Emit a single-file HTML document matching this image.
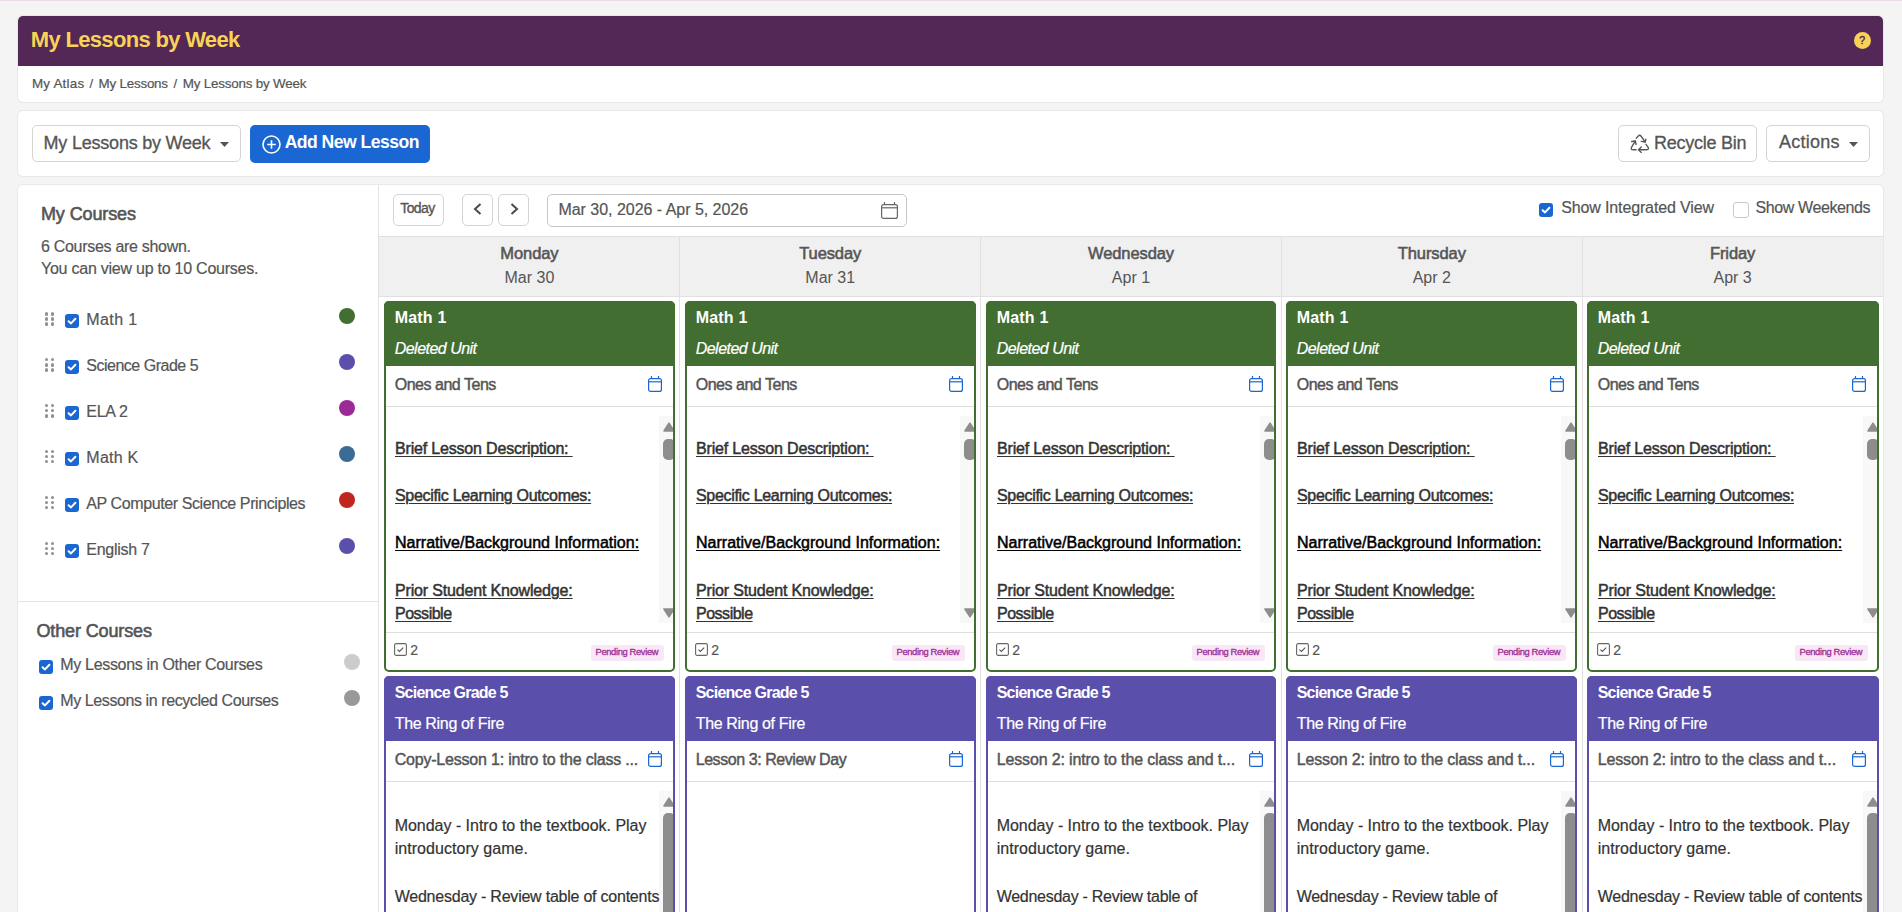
<!DOCTYPE html>
<html><head><meta charset="utf-8">
<style>
*{box-sizing:border-box;margin:0;padding:0}
html,body{width:1902px;height:912px;overflow:hidden;background:#f4f4f4;font-family:"Liberation Sans",sans-serif;color:#555}
.a{position:absolute}
.t{position:absolute;white-space:nowrap;line-height:1}
.cb{position:absolute;width:14px;height:14px;border-radius:3px;background:#1a66d2}
.cb svg{position:absolute;left:0;top:0}
.semi{-webkit-text-stroke:0.25px currentColor}
u{text-decoration:underline;text-decoration-thickness:1px;text-underline-offset:2px}
</style></head><body>
<div class="a" style="left:0px;top:0px;width:1902px;height:1px;background:#e9deea"></div>
<div class="a" style="left:18px;top:16px;width:1865px;height:86px;background:#fff;border-radius:5px;box-shadow:0 0 0 1px #e8e8e8"></div>
<div class="a" style="left:18px;top:16px;width:1865px;height:50px;background:#532756;border-radius:5px 5px 0 0"></div>
<div class="t" style="left:30.8px;top:28.6px;font-size:22px;color:#f8d354;font-weight:bold;letter-spacing:-0.676px">My Lessons by Week</div>
<div class="a" style="left:1853.5px;top:31.5px;width:17px;height:17px;border-radius:50%;background:#f7d257"></div>
<div class="t" style="left:1859.2px;top:35.3px;font-size:10.5px;color:#532756;-webkit-text-stroke:0.4px #532756">?</div>
<div class="t" style="left:32.0px;top:76.7px;font-size:13.4px;color:#555;letter-spacing:0.214px;-webkit-text-stroke:0.2px #555">My Atlas</div>
<div class="t" style="left:89.5px;top:76.8px;font-size:13px;color:#555;-webkit-text-stroke:0.2px #555">/</div>
<div class="t" style="left:98.6px;top:76.7px;font-size:13.4px;color:#555;letter-spacing:-0.222px;-webkit-text-stroke:0.2px #555">My Lessons</div>
<div class="t" style="left:173.5px;top:76.8px;font-size:13px;color:#555;-webkit-text-stroke:0.2px #555">/</div>
<div class="t" style="left:182.8px;top:76.7px;font-size:13.4px;color:#555;letter-spacing:-0.2px;-webkit-text-stroke:0.2px #555">My Lessons by Week</div>
<div class="a" style="left:18px;top:111px;width:1865px;height:65px;background:#fff;border-radius:5px;box-shadow:0 0 0 1px #e8e8e8"></div>
<div class="a" style="left:32px;top:125px;width:209px;height:37px;border:1px solid #d4d4d4;border-radius:5px;background:#fff"></div>
<div class="t" style="left:43.6px;top:133.6px;font-size:18px;color:#555;letter-spacing:-0.218px;-webkit-text-stroke:0.3px #555">My Lessons by Week</div>
<svg class="a" style="left:220px;top:142px" width="9" height="5" viewBox="0 0 9 5"><path d="M0 0 L9 0 L4.5 5 Z" fill="#555"/></svg>
<div class="a" style="left:250px;top:125px;width:180px;height:38px;background:#1a66d2;border-radius:5px"></div>
<svg class="a" style="left:262px;top:135px" width="19" height="19" viewBox="0 0 19 19"><circle cx="9.5" cy="9.5" r="8.5" fill="none" stroke="#fff" stroke-width="1.6"/><path d="M9.5 5.2V13.8M5.2 9.5H13.8" stroke="#fff" stroke-width="1.6"/></svg>
<div class="t" style="left:284.7px;top:134.3px;font-size:17.6px;color:#fff;font-weight:bold;letter-spacing:-0.538px">Add New Lesson</div>
<div class="a" style="left:1618px;top:125px;width:139px;height:37px;border:1px solid #d4d4d4;border-radius:5px;background:#fff"></div>
<svg class="a" style="left:1626px;top:130px" width="28" height="26" viewBox="0 0 28 26" fill="none" stroke="#555" stroke-width="1.35" stroke-linecap="round" stroke-linejoin="round"><path d="M10.3 8.3 L12.4 5.9 Q13.7 4.6 14.9 6.0 L19.2 11.9"/><path d="M15.3 11.4 L19.3 12.0 L19.8 9.1"/><path d="M10 19.7 L6.9 19.7 Q4.6 19.5 5.5 17.4 L9.3 10.8"/><path d="M5.7 11.5 L9.3 10.8 L10.1 14.5"/><path d="M20 14.3 L22.2 17.4 Q23.1 19.6 20.6 19.7 L12.5 19.7"/><path d="M15.3 17.0 L12.5 19.7 L15.3 22.4"/></svg>
<div class="t" style="left:1654.0px;top:133.7px;font-size:18px;color:#555;letter-spacing:-0.26px;-webkit-text-stroke:0.3px #555">Recycle Bin</div>
<div class="a" style="left:1766px;top:125px;width:104px;height:37px;border:1px solid #d4d4d4;border-radius:5px;background:#fff"></div>
<div class="t" style="left:1779.0px;top:132.7px;font-size:18px;color:#555;letter-spacing:0.233px;-webkit-text-stroke:0.3px #555">Actions</div>
<svg class="a" style="left:1848.5px;top:141.5px" width="9" height="5" viewBox="0 0 9 5"><path d="M0 0 L9 0 L4.5 5 Z" fill="#555"/></svg>
<div class="a" style="left:18px;top:185px;width:1865px;height:755px;background:#fff;border-radius:5px;box-shadow:0 0 0 1px #e8e8e8"></div>
<div class="a" style="left:378px;top:185px;width:1px;height:727px;background:#e2e2e2"></div>
<div class="t" style="left:41.0px;top:205.1px;font-size:18px;color:#555;letter-spacing:-0.122px;-webkit-text-stroke:0.6px #555">My Courses</div>
<div class="t" style="left:41.0px;top:238.7px;font-size:16px;color:#555;letter-spacing:-0.295px;-webkit-text-stroke:0.2px #555">6 Courses are shown.</div>
<div class="t" style="left:41.0px;top:260.7px;font-size:16px;color:#555;letter-spacing:-0.241px;-webkit-text-stroke:0.2px #555">You can view up to 10 Courses.</div>
<div class="a" style="left:45px;top:312.3px;width:9px;height:14px"><i style="position:absolute;left:0.0px;top:0.0px;width:3.3px;height:3.3px;border-radius:50%;background:#8f8f8f"></i><i style="position:absolute;left:5.7px;top:0.0px;width:3.3px;height:3.3px;border-radius:50%;background:#8f8f8f"></i><i style="position:absolute;left:0.0px;top:5.1px;width:3.3px;height:3.3px;border-radius:50%;background:#8f8f8f"></i><i style="position:absolute;left:5.7px;top:5.1px;width:3.3px;height:3.3px;border-radius:50%;background:#8f8f8f"></i><i style="position:absolute;left:0.0px;top:10.2px;width:3.3px;height:3.3px;border-radius:50%;background:#8f8f8f"></i><i style="position:absolute;left:5.7px;top:10.2px;width:3.3px;height:3.3px;border-radius:50%;background:#8f8f8f"></i></div>
<div class="cb" style="left:65px;top:314.0px"><svg width="14" height="14" viewBox="0 0 14 14"><path d="M3.6 7.2 L6 9.4 L10.4 4.8" fill="none" stroke="#fff" stroke-width="2" stroke-linecap="round" stroke-linejoin="round"/></svg></div>
<div class="t" style="left:86.3px;top:312.0px;font-size:16px;color:#555;letter-spacing:0.4px;-webkit-text-stroke:0.2px #555">Math 1</div>
<div class="a" style="left:339px;top:308.0px;width:16px;height:16px;border-radius:50%;background:#426e32"></div>
<div class="a" style="left:45px;top:358.2px;width:9px;height:14px"><i style="position:absolute;left:0.0px;top:0.0px;width:3.3px;height:3.3px;border-radius:50%;background:#8f8f8f"></i><i style="position:absolute;left:5.7px;top:0.0px;width:3.3px;height:3.3px;border-radius:50%;background:#8f8f8f"></i><i style="position:absolute;left:0.0px;top:5.1px;width:3.3px;height:3.3px;border-radius:50%;background:#8f8f8f"></i><i style="position:absolute;left:5.7px;top:5.1px;width:3.3px;height:3.3px;border-radius:50%;background:#8f8f8f"></i><i style="position:absolute;left:0.0px;top:10.2px;width:3.3px;height:3.3px;border-radius:50%;background:#8f8f8f"></i><i style="position:absolute;left:5.7px;top:10.2px;width:3.3px;height:3.3px;border-radius:50%;background:#8f8f8f"></i></div>
<div class="cb" style="left:65px;top:359.9px"><svg width="14" height="14" viewBox="0 0 14 14"><path d="M3.6 7.2 L6 9.4 L10.4 4.8" fill="none" stroke="#fff" stroke-width="2" stroke-linecap="round" stroke-linejoin="round"/></svg></div>
<div class="t" style="left:86.3px;top:357.9px;font-size:16px;color:#555;letter-spacing:-0.493px;-webkit-text-stroke:0.2px #555">Science Grade 5</div>
<div class="a" style="left:339px;top:353.9px;width:16px;height:16px;border-radius:50%;background:#5a50ab"></div>
<div class="a" style="left:45px;top:404.1px;width:9px;height:14px"><i style="position:absolute;left:0.0px;top:0.0px;width:3.3px;height:3.3px;border-radius:50%;background:#8f8f8f"></i><i style="position:absolute;left:5.7px;top:0.0px;width:3.3px;height:3.3px;border-radius:50%;background:#8f8f8f"></i><i style="position:absolute;left:0.0px;top:5.1px;width:3.3px;height:3.3px;border-radius:50%;background:#8f8f8f"></i><i style="position:absolute;left:5.7px;top:5.1px;width:3.3px;height:3.3px;border-radius:50%;background:#8f8f8f"></i><i style="position:absolute;left:0.0px;top:10.2px;width:3.3px;height:3.3px;border-radius:50%;background:#8f8f8f"></i><i style="position:absolute;left:5.7px;top:10.2px;width:3.3px;height:3.3px;border-radius:50%;background:#8f8f8f"></i></div>
<div class="cb" style="left:65px;top:405.8px"><svg width="14" height="14" viewBox="0 0 14 14"><path d="M3.6 7.2 L6 9.4 L10.4 4.8" fill="none" stroke="#fff" stroke-width="2" stroke-linecap="round" stroke-linejoin="round"/></svg></div>
<div class="t" style="left:86.3px;top:403.8px;font-size:16px;color:#555;letter-spacing:-0.25px;-webkit-text-stroke:0.2px #555">ELA 2</div>
<div class="a" style="left:339px;top:399.8px;width:16px;height:16px;border-radius:50%;background:#9b2a96"></div>
<div class="a" style="left:45px;top:450.0px;width:9px;height:14px"><i style="position:absolute;left:0.0px;top:0.0px;width:3.3px;height:3.3px;border-radius:50%;background:#8f8f8f"></i><i style="position:absolute;left:5.7px;top:0.0px;width:3.3px;height:3.3px;border-radius:50%;background:#8f8f8f"></i><i style="position:absolute;left:0.0px;top:5.1px;width:3.3px;height:3.3px;border-radius:50%;background:#8f8f8f"></i><i style="position:absolute;left:5.7px;top:5.1px;width:3.3px;height:3.3px;border-radius:50%;background:#8f8f8f"></i><i style="position:absolute;left:0.0px;top:10.2px;width:3.3px;height:3.3px;border-radius:50%;background:#8f8f8f"></i><i style="position:absolute;left:5.7px;top:10.2px;width:3.3px;height:3.3px;border-radius:50%;background:#8f8f8f"></i></div>
<div class="cb" style="left:65px;top:451.7px"><svg width="14" height="14" viewBox="0 0 14 14"><path d="M3.6 7.2 L6 9.4 L10.4 4.8" fill="none" stroke="#fff" stroke-width="2" stroke-linecap="round" stroke-linejoin="round"/></svg></div>
<div class="t" style="left:86.3px;top:449.7px;font-size:16px;color:#555;letter-spacing:0.26px;-webkit-text-stroke:0.2px #555">Math K</div>
<div class="a" style="left:339px;top:445.7px;width:16px;height:16px;border-radius:50%;background:#3b6c96"></div>
<div class="a" style="left:45px;top:495.9px;width:9px;height:14px"><i style="position:absolute;left:0.0px;top:0.0px;width:3.3px;height:3.3px;border-radius:50%;background:#8f8f8f"></i><i style="position:absolute;left:5.7px;top:0.0px;width:3.3px;height:3.3px;border-radius:50%;background:#8f8f8f"></i><i style="position:absolute;left:0.0px;top:5.1px;width:3.3px;height:3.3px;border-radius:50%;background:#8f8f8f"></i><i style="position:absolute;left:5.7px;top:5.1px;width:3.3px;height:3.3px;border-radius:50%;background:#8f8f8f"></i><i style="position:absolute;left:0.0px;top:10.2px;width:3.3px;height:3.3px;border-radius:50%;background:#8f8f8f"></i><i style="position:absolute;left:5.7px;top:10.2px;width:3.3px;height:3.3px;border-radius:50%;background:#8f8f8f"></i></div>
<div class="cb" style="left:65px;top:497.6px"><svg width="14" height="14" viewBox="0 0 14 14"><path d="M3.6 7.2 L6 9.4 L10.4 4.8" fill="none" stroke="#fff" stroke-width="2" stroke-linecap="round" stroke-linejoin="round"/></svg></div>
<div class="t" style="left:86.3px;top:495.6px;font-size:16px;color:#555;letter-spacing:-0.4px;-webkit-text-stroke:0.2px #555">AP Computer Science Principles</div>
<div class="a" style="left:339px;top:491.6px;width:16px;height:16px;border-radius:50%;background:#c0251f"></div>
<div class="a" style="left:45px;top:541.8px;width:9px;height:14px"><i style="position:absolute;left:0.0px;top:0.0px;width:3.3px;height:3.3px;border-radius:50%;background:#8f8f8f"></i><i style="position:absolute;left:5.7px;top:0.0px;width:3.3px;height:3.3px;border-radius:50%;background:#8f8f8f"></i><i style="position:absolute;left:0.0px;top:5.1px;width:3.3px;height:3.3px;border-radius:50%;background:#8f8f8f"></i><i style="position:absolute;left:5.7px;top:5.1px;width:3.3px;height:3.3px;border-radius:50%;background:#8f8f8f"></i><i style="position:absolute;left:0.0px;top:10.2px;width:3.3px;height:3.3px;border-radius:50%;background:#8f8f8f"></i><i style="position:absolute;left:5.7px;top:10.2px;width:3.3px;height:3.3px;border-radius:50%;background:#8f8f8f"></i></div>
<div class="cb" style="left:65px;top:543.5px"><svg width="14" height="14" viewBox="0 0 14 14"><path d="M3.6 7.2 L6 9.4 L10.4 4.8" fill="none" stroke="#fff" stroke-width="2" stroke-linecap="round" stroke-linejoin="round"/></svg></div>
<div class="t" style="left:86.3px;top:541.5px;font-size:16px;color:#555;letter-spacing:-0.263px;-webkit-text-stroke:0.2px #555">English 7</div>
<div class="a" style="left:339px;top:537.5px;width:16px;height:16px;border-radius:50%;background:#5a50ab"></div>
<div class="a" style="left:18px;top:601px;width:360px;height:1px;background:#e2e2e2"></div>
<div class="t" style="left:36.5px;top:622.1px;font-size:18px;color:#555;letter-spacing:-0.133px;-webkit-text-stroke:0.6px #555">Other Courses</div>
<div class="cb" style="left:39px;top:659.5px"><svg width="14" height="14" viewBox="0 0 14 14"><path d="M3.6 7.2 L6 9.4 L10.4 4.8" fill="none" stroke="#fff" stroke-width="2" stroke-linecap="round" stroke-linejoin="round"/></svg></div>
<div class="t" style="left:60.3px;top:656.7px;font-size:16px;color:#555;letter-spacing:-0.323px;-webkit-text-stroke:0.2px #555">My Lessons in Other Courses</div>
<div class="a" style="left:344px;top:654px;width:16px;height:16px;border-radius:50%;background:#cccccc"></div>
<div class="cb" style="left:39px;top:695.5px"><svg width="14" height="14" viewBox="0 0 14 14"><path d="M3.6 7.2 L6 9.4 L10.4 4.8" fill="none" stroke="#fff" stroke-width="2" stroke-linecap="round" stroke-linejoin="round"/></svg></div>
<div class="t" style="left:60.3px;top:692.7px;font-size:16px;color:#555;letter-spacing:-0.41px;-webkit-text-stroke:0.2px #555">My Lessons in recycled Courses</div>
<div class="a" style="left:344px;top:690px;width:16px;height:16px;border-radius:50%;background:#999999"></div>
<div class="a" style="left:393px;top:194px;width:51px;height:32px;border:1px solid #d4d4d4;border-radius:5px;background:#fff"></div>
<div class="t" style="left:400.3px;top:201.0px;font-size:14px;color:#555;letter-spacing:-0.625px;-webkit-text-stroke:0.35px #555">Today</div>
<div class="a" style="left:462px;top:194px;width:31px;height:32px;border:1px solid #d4d4d4;border-radius:5px;background:#fff"></div>
<div class="a" style="left:498px;top:194px;width:31px;height:32px;border:1px solid #d4d4d4;border-radius:5px;background:#fff"></div>
<svg class="a" style="left:473px;top:203px" width="9" height="12" viewBox="0 0 9 12"><path d="M7.5 1 L2 6 L7.5 11" fill="none" stroke="#4a4a4a" stroke-width="2"/></svg>
<svg class="a" style="left:510px;top:203px" width="9" height="12" viewBox="0 0 9 12"><path d="M1.5 1 L7 6 L1.5 11" fill="none" stroke="#4a4a4a" stroke-width="2"/></svg>
<div class="a" style="left:547px;top:194px;width:360px;height:33px;border:1px solid #c6c6c6;border-radius:5px;background:#fff"></div>
<div class="t" style="left:558.4px;top:201.5px;font-size:16px;color:#555;letter-spacing:-0.024px;-webkit-text-stroke:0.2px #555">Mar 30, 2026 - Apr 5, 2026</div>
<svg class="a" style="left:881px;top:202px" width="17" height="17" viewBox="0 0 17 17"><rect x="0.6" y="2.6" width="15.8" height="13.8" rx="2" fill="none" stroke="#666" stroke-width="1.2"/><line x1="0.6" y1="5.8" x2="16.4" y2="5.8" stroke="#666" stroke-width="1.2"/><line x1="3.5" y1="0" x2="3.5" y2="3" stroke="#666" stroke-width="1.2"/><line x1="13.5" y1="0" x2="13.5" y2="3" stroke="#666" stroke-width="1.2"/></svg>
<div class="cb" style="left:1539px;top:203px"><svg width="14" height="14" viewBox="0 0 14 14"><path d="M3.6 7.2 L6 9.4 L10.4 4.8" fill="none" stroke="#fff" stroke-width="2" stroke-linecap="round" stroke-linejoin="round"/></svg></div>
<div class="t" style="left:1561.2px;top:199.5px;font-size:16px;color:#555;letter-spacing:-0.132px;-webkit-text-stroke:0.2px #555">Show Integrated View</div>
<div class="a" style="left:1733px;top:202px;width:16px;height:16px;border:1px solid #c9c9c9;border-radius:3px;background:#fff"></div>
<div class="t" style="left:1755.6px;top:199.5px;font-size:16px;color:#555;letter-spacing:-0.4px;-webkit-text-stroke:0.2px #555">Show Weekends</div>
<div class="a" style="left:379px;top:236px;width:1504px;height:1px;background:#e0e0e0"></div>
<div class="a" style="left:379px;top:237px;width:1504px;height:59px;background:#f0f0f0"></div>
<div class="a" style="left:379px;top:296px;width:1504px;height:1px;background:#e0e0e0"></div>
<div class="t" style="left:379.0px;top:244.8px;width:300.8px;text-align:center;font-size:16.5px;color:#555;-webkit-text-stroke:0.55px #555;letter-spacing:-0.1px">Monday</div>
<div class="t" style="left:379.0px;top:270.3px;width:300.8px;text-align:center;font-size:16px;color:#555">Mar 30</div>
<div class="a" style="left:679px;top:237px;width:1px;height:675px;background:#e0e0e0"></div>
<div class="t" style="left:679.8px;top:244.8px;width:300.8px;text-align:center;font-size:16.5px;color:#555;-webkit-text-stroke:0.55px #555;letter-spacing:-0.1px">Tuesday</div>
<div class="t" style="left:679.8px;top:270.3px;width:300.8px;text-align:center;font-size:16px;color:#555">Mar 31</div>
<div class="a" style="left:980px;top:237px;width:1px;height:675px;background:#e0e0e0"></div>
<div class="t" style="left:980.6px;top:244.8px;width:300.8px;text-align:center;font-size:16.5px;color:#555;-webkit-text-stroke:0.55px #555;letter-spacing:-0.1px">Wednesday</div>
<div class="t" style="left:980.6px;top:270.3px;width:300.8px;text-align:center;font-size:16px;color:#555">Apr 1</div>
<div class="a" style="left:1281px;top:237px;width:1px;height:675px;background:#e0e0e0"></div>
<div class="t" style="left:1281.4px;top:244.8px;width:300.8px;text-align:center;font-size:16.5px;color:#555;-webkit-text-stroke:0.55px #555;letter-spacing:-0.1px">Thursday</div>
<div class="t" style="left:1281.4px;top:270.3px;width:300.8px;text-align:center;font-size:16px;color:#555">Apr 2</div>
<div class="a" style="left:1582px;top:237px;width:1px;height:675px;background:#e0e0e0"></div>
<div class="t" style="left:1582.2px;top:244.8px;width:300.8px;text-align:center;font-size:16.5px;color:#555;-webkit-text-stroke:0.55px #555;letter-spacing:-0.1px">Friday</div>
<div class="t" style="left:1582.2px;top:270.3px;width:300.8px;text-align:center;font-size:16px;color:#555">Apr 3</div>
<div class="a" style="left:384px;top:301px;width:291px;height:371px;background:#fff;border-radius:5px"></div>
<div class="a" style="left:384px;top:301px;width:291px;height:65px;background:#426e32;border-radius:5px 5px 0 0"></div>
<div class="t" style="left:394.7px;top:309.7px;font-size:16px;color:#fff;font-weight:bold;letter-spacing:0.2px">Math 1</div>
<div class="t" style="left:394.7px;top:340.5px;font-size:16px;color:#fff;font-style:italic;letter-spacing:-0.518px;-webkit-text-stroke:0.2px #fff">Deleted Unit</div>
<div class="t" style="left:394.7px;top:376.5px;font-size:16px;color:#555;letter-spacing:-0.475px;-webkit-text-stroke:0.45px #555">Ones and Tens</div>
<svg class="a" style="left:648px;top:376px" width="14" height="16" viewBox="0 0 14 16"><rect x="0.6" y="2.6" width="12.8" height="12.8" rx="2" fill="none" stroke="#1a66d2" stroke-width="1.2"/><line x1="0.6" y1="5.8" x2="13.4" y2="5.8" stroke="#1a66d2" stroke-width="1.2"/><line x1="3.5" y1="0" x2="3.5" y2="3" stroke="#1a66d2" stroke-width="1.2"/><line x1="10.5" y1="0" x2="10.5" y2="3" stroke="#1a66d2" stroke-width="1.2"/></svg>
<div class="a" style="left:386px;top:406px;width:287px;height:1px;background:#dedede"></div>
<div class="a" style="left:659px;top:416px;width:14px;height:207px;background:#f8f8f8"></div>
<svg class="a" style="left:663px;top:422px" width="12" height="10" viewBox="0 0 12 10"><path d="M6 1.2 L11 9 L1 9 Z" fill="#8d8d8d" stroke="#8d8d8d" stroke-width="1.6" stroke-linejoin="round"/></svg>
<svg class="a" style="left:663px;top:608px" width="12" height="10" viewBox="0 0 12 10"><path d="M1 1 L11 1 L6 8.8 Z" fill="#8d8d8d" stroke="#8d8d8d" stroke-width="1.6" stroke-linejoin="round"/></svg>
<div class="a" style="left:663px;top:439px;width:12px;height:21px;background:#8d8d8d;border-radius:5px"></div>
<div class="t" style="left:395.0px;top:440.5px;font-size:16px;color:#333;letter-spacing:-0.179px;-webkit-text-stroke:0.5px #333"><u>Brief Lesson Description:&nbsp;</u></div>
<div class="t" style="left:395.0px;top:487.6px;font-size:16px;color:#333;letter-spacing:-0.315px;-webkit-text-stroke:0.5px #333"><u>Specific Learning Outcomes:</u></div>
<div class="t" style="left:395.0px;top:534.7px;font-size:16px;color:#000;letter-spacing:0.013px;-webkit-text-stroke:0.5px #000"><u>Narrative/Background Information:</u></div>
<div class="t" style="left:395.0px;top:582.5px;font-size:16px;color:#333;letter-spacing:-0.161px;-webkit-text-stroke:0.5px #333"><u>Prior Student Knowledge:</u></div>
<div class="t" style="left:395.0px;top:606.1px;font-size:16px;color:#333;letter-spacing:-0.486px;-webkit-text-stroke:0.5px #333"><u>Possible</u></div>
<div class="a" style="left:386px;top:632px;width:287px;height:1px;background:#dedede"></div>
<svg class="a" style="left:394px;top:643px" width="13" height="13" viewBox="0 0 13 13"><rect x="0.6" y="0.6" width="11.8" height="11.8" rx="1.5" fill="none" stroke="#666" stroke-width="1.1"/><path d="M3.4 6.6 L5.4 8.4 L9.2 4.6" fill="none" stroke="#555" stroke-width="1.1"/></svg>
<div class="t" style="left:410.3px;top:643.3px;font-size:14px;color:#555;-webkit-text-stroke:0.2px #555">2</div>
<div class="a" style="left:591px;top:645px;width:73px;height:16px;background:#f9e7f5;border-radius:3px"></div>
<div class="t" style="left:595.5px;top:647.4px;font-size:9.4px;color:#9c2b97;letter-spacing:-0.362px;-webkit-text-stroke:0.3px #9c2b97">Pending Review</div>
<div class="a" style="left:384px;top:301px;width:291px;height:371px;border:2px solid #426e32;border-radius:5px"></div>
<div class="a" style="left:384px;top:676px;width:291px;height:264px;background:#fff;border-radius:5px"></div>
<div class="a" style="left:384px;top:676px;width:291px;height:65px;background:#5a50ab;border-radius:5px 5px 0 0"></div>
<div class="t" style="left:394.7px;top:684.5px;font-size:16px;color:#fff;font-weight:bold;letter-spacing:-0.764px">Science Grade 5</div>
<div class="t" style="left:394.7px;top:715.5px;font-size:16px;color:#fff;letter-spacing:-0.333px;-webkit-text-stroke:0.2px #fff">The Ring of Fire</div>
<div class="t" style="left:394.7px;top:751.5px;font-size:16px;color:#555;letter-spacing:-0.2px;-webkit-text-stroke:0.45px #555">Copy-Lesson 1: intro to the class ...</div>
<svg class="a" style="left:648px;top:751px" width="14" height="16" viewBox="0 0 14 16"><rect x="0.6" y="2.6" width="12.8" height="12.8" rx="2" fill="none" stroke="#1a66d2" stroke-width="1.2"/><line x1="0.6" y1="5.8" x2="13.4" y2="5.8" stroke="#1a66d2" stroke-width="1.2"/><line x1="3.5" y1="0" x2="3.5" y2="3" stroke="#1a66d2" stroke-width="1.2"/><line x1="10.5" y1="0" x2="10.5" y2="3" stroke="#1a66d2" stroke-width="1.2"/></svg>
<div class="a" style="left:386px;top:781px;width:287px;height:1px;background:#dedede"></div>
<div class="a" style="left:659px;top:791px;width:14px;height:121px;background:#f8f8f8"></div>
<svg class="a" style="left:663px;top:797px" width="12" height="10" viewBox="0 0 12 10"><path d="M6 1.2 L11 9 L1 9 Z" fill="#8d8d8d" stroke="#8d8d8d" stroke-width="1.6" stroke-linejoin="round"/></svg>
<div class="a" style="left:663px;top:813px;width:12px;height:147px;background:#8d8d8d;border-radius:5px"></div>
<div class="t" style="left:394.7px;top:818.0px;font-size:16px;color:#333;letter-spacing:-0.023px;-webkit-text-stroke:0.2px #333">Monday - Intro to the textbook. Play</div>
<div class="t" style="left:394.7px;top:840.5px;font-size:16px;color:#333;letter-spacing:0.047px;-webkit-text-stroke:0.2px #333">introductory game.</div>
<div class="t" style="left:394.7px;top:889.1px;font-size:16px;color:#333;letter-spacing:-0.229px;-webkit-text-stroke:0.2px #333">Wednesday - Review table of contents</div>
<div class="a" style="left:384px;top:676px;width:291px;height:264px;border:2px solid #5a50ab;border-radius:5px"></div>
<div class="a" style="left:685px;top:301px;width:291px;height:371px;background:#fff;border-radius:5px"></div>
<div class="a" style="left:685px;top:301px;width:291px;height:65px;background:#426e32;border-radius:5px 5px 0 0"></div>
<div class="t" style="left:695.7px;top:309.7px;font-size:16px;color:#fff;font-weight:bold;letter-spacing:0.2px">Math 1</div>
<div class="t" style="left:695.7px;top:340.5px;font-size:16px;color:#fff;font-style:italic;letter-spacing:-0.518px;-webkit-text-stroke:0.2px #fff">Deleted Unit</div>
<div class="t" style="left:695.7px;top:376.5px;font-size:16px;color:#555;letter-spacing:-0.475px;-webkit-text-stroke:0.45px #555">Ones and Tens</div>
<svg class="a" style="left:949px;top:376px" width="14" height="16" viewBox="0 0 14 16"><rect x="0.6" y="2.6" width="12.8" height="12.8" rx="2" fill="none" stroke="#1a66d2" stroke-width="1.2"/><line x1="0.6" y1="5.8" x2="13.4" y2="5.8" stroke="#1a66d2" stroke-width="1.2"/><line x1="3.5" y1="0" x2="3.5" y2="3" stroke="#1a66d2" stroke-width="1.2"/><line x1="10.5" y1="0" x2="10.5" y2="3" stroke="#1a66d2" stroke-width="1.2"/></svg>
<div class="a" style="left:687px;top:406px;width:287px;height:1px;background:#dedede"></div>
<div class="a" style="left:960px;top:416px;width:14px;height:207px;background:#f8f8f8"></div>
<svg class="a" style="left:964px;top:422px" width="12" height="10" viewBox="0 0 12 10"><path d="M6 1.2 L11 9 L1 9 Z" fill="#8d8d8d" stroke="#8d8d8d" stroke-width="1.6" stroke-linejoin="round"/></svg>
<svg class="a" style="left:964px;top:608px" width="12" height="10" viewBox="0 0 12 10"><path d="M1 1 L11 1 L6 8.8 Z" fill="#8d8d8d" stroke="#8d8d8d" stroke-width="1.6" stroke-linejoin="round"/></svg>
<div class="a" style="left:964px;top:439px;width:12px;height:21px;background:#8d8d8d;border-radius:5px"></div>
<div class="t" style="left:696.0px;top:440.5px;font-size:16px;color:#333;letter-spacing:-0.179px;-webkit-text-stroke:0.5px #333"><u>Brief Lesson Description:&nbsp;</u></div>
<div class="t" style="left:696.0px;top:487.6px;font-size:16px;color:#333;letter-spacing:-0.315px;-webkit-text-stroke:0.5px #333"><u>Specific Learning Outcomes:</u></div>
<div class="t" style="left:696.0px;top:534.7px;font-size:16px;color:#000;letter-spacing:0.013px;-webkit-text-stroke:0.5px #000"><u>Narrative/Background Information:</u></div>
<div class="t" style="left:696.0px;top:582.5px;font-size:16px;color:#333;letter-spacing:-0.161px;-webkit-text-stroke:0.5px #333"><u>Prior Student Knowledge:</u></div>
<div class="t" style="left:696.0px;top:606.1px;font-size:16px;color:#333;letter-spacing:-0.486px;-webkit-text-stroke:0.5px #333"><u>Possible</u></div>
<div class="a" style="left:687px;top:632px;width:287px;height:1px;background:#dedede"></div>
<svg class="a" style="left:695px;top:643px" width="13" height="13" viewBox="0 0 13 13"><rect x="0.6" y="0.6" width="11.8" height="11.8" rx="1.5" fill="none" stroke="#666" stroke-width="1.1"/><path d="M3.4 6.6 L5.4 8.4 L9.2 4.6" fill="none" stroke="#555" stroke-width="1.1"/></svg>
<div class="t" style="left:711.3px;top:643.3px;font-size:14px;color:#555;-webkit-text-stroke:0.2px #555">2</div>
<div class="a" style="left:892px;top:645px;width:73px;height:16px;background:#f9e7f5;border-radius:3px"></div>
<div class="t" style="left:896.5px;top:647.4px;font-size:9.4px;color:#9c2b97;letter-spacing:-0.362px;-webkit-text-stroke:0.3px #9c2b97">Pending Review</div>
<div class="a" style="left:685px;top:301px;width:291px;height:371px;border:2px solid #426e32;border-radius:5px"></div>
<div class="a" style="left:685px;top:676px;width:291px;height:264px;background:#fff;border-radius:5px"></div>
<div class="a" style="left:685px;top:676px;width:291px;height:65px;background:#5a50ab;border-radius:5px 5px 0 0"></div>
<div class="t" style="left:695.7px;top:684.5px;font-size:16px;color:#fff;font-weight:bold;letter-spacing:-0.764px">Science Grade 5</div>
<div class="t" style="left:695.7px;top:715.5px;font-size:16px;color:#fff;letter-spacing:-0.333px;-webkit-text-stroke:0.2px #fff">The Ring of Fire</div>
<div class="t" style="left:695.7px;top:751.5px;font-size:16px;color:#555;letter-spacing:-0.432px;-webkit-text-stroke:0.45px #555">Lesson 3: Review Day</div>
<svg class="a" style="left:949px;top:751px" width="14" height="16" viewBox="0 0 14 16"><rect x="0.6" y="2.6" width="12.8" height="12.8" rx="2" fill="none" stroke="#1a66d2" stroke-width="1.2"/><line x1="0.6" y1="5.8" x2="13.4" y2="5.8" stroke="#1a66d2" stroke-width="1.2"/><line x1="3.5" y1="0" x2="3.5" y2="3" stroke="#1a66d2" stroke-width="1.2"/><line x1="10.5" y1="0" x2="10.5" y2="3" stroke="#1a66d2" stroke-width="1.2"/></svg>
<div class="a" style="left:687px;top:781px;width:287px;height:1px;background:#dedede"></div>
<div class="a" style="left:685px;top:676px;width:291px;height:264px;border:2px solid #5a50ab;border-radius:5px"></div>
<div class="a" style="left:986px;top:301px;width:290px;height:371px;background:#fff;border-radius:5px"></div>
<div class="a" style="left:986px;top:301px;width:290px;height:65px;background:#426e32;border-radius:5px 5px 0 0"></div>
<div class="t" style="left:996.7px;top:309.7px;font-size:16px;color:#fff;font-weight:bold;letter-spacing:0.2px">Math 1</div>
<div class="t" style="left:996.7px;top:340.5px;font-size:16px;color:#fff;font-style:italic;letter-spacing:-0.518px;-webkit-text-stroke:0.2px #fff">Deleted Unit</div>
<div class="t" style="left:996.7px;top:376.5px;font-size:16px;color:#555;letter-spacing:-0.475px;-webkit-text-stroke:0.45px #555">Ones and Tens</div>
<svg class="a" style="left:1249px;top:376px" width="14" height="16" viewBox="0 0 14 16"><rect x="0.6" y="2.6" width="12.8" height="12.8" rx="2" fill="none" stroke="#1a66d2" stroke-width="1.2"/><line x1="0.6" y1="5.8" x2="13.4" y2="5.8" stroke="#1a66d2" stroke-width="1.2"/><line x1="3.5" y1="0" x2="3.5" y2="3" stroke="#1a66d2" stroke-width="1.2"/><line x1="10.5" y1="0" x2="10.5" y2="3" stroke="#1a66d2" stroke-width="1.2"/></svg>
<div class="a" style="left:988px;top:406px;width:286px;height:1px;background:#dedede"></div>
<div class="a" style="left:1260px;top:416px;width:14px;height:207px;background:#f8f8f8"></div>
<svg class="a" style="left:1264px;top:422px" width="12" height="10" viewBox="0 0 12 10"><path d="M6 1.2 L11 9 L1 9 Z" fill="#8d8d8d" stroke="#8d8d8d" stroke-width="1.6" stroke-linejoin="round"/></svg>
<svg class="a" style="left:1264px;top:608px" width="12" height="10" viewBox="0 0 12 10"><path d="M1 1 L11 1 L6 8.8 Z" fill="#8d8d8d" stroke="#8d8d8d" stroke-width="1.6" stroke-linejoin="round"/></svg>
<div class="a" style="left:1264px;top:439px;width:12px;height:21px;background:#8d8d8d;border-radius:5px"></div>
<div class="t" style="left:997.0px;top:440.5px;font-size:16px;color:#333;letter-spacing:-0.179px;-webkit-text-stroke:0.5px #333"><u>Brief Lesson Description:&nbsp;</u></div>
<div class="t" style="left:997.0px;top:487.6px;font-size:16px;color:#333;letter-spacing:-0.315px;-webkit-text-stroke:0.5px #333"><u>Specific Learning Outcomes:</u></div>
<div class="t" style="left:997.0px;top:534.7px;font-size:16px;color:#000;letter-spacing:0.013px;-webkit-text-stroke:0.5px #000"><u>Narrative/Background Information:</u></div>
<div class="t" style="left:997.0px;top:582.5px;font-size:16px;color:#333;letter-spacing:-0.161px;-webkit-text-stroke:0.5px #333"><u>Prior Student Knowledge:</u></div>
<div class="t" style="left:997.0px;top:606.1px;font-size:16px;color:#333;letter-spacing:-0.486px;-webkit-text-stroke:0.5px #333"><u>Possible</u></div>
<div class="a" style="left:988px;top:632px;width:286px;height:1px;background:#dedede"></div>
<svg class="a" style="left:996px;top:643px" width="13" height="13" viewBox="0 0 13 13"><rect x="0.6" y="0.6" width="11.8" height="11.8" rx="1.5" fill="none" stroke="#666" stroke-width="1.1"/><path d="M3.4 6.6 L5.4 8.4 L9.2 4.6" fill="none" stroke="#555" stroke-width="1.1"/></svg>
<div class="t" style="left:1012.3px;top:643.3px;font-size:14px;color:#555;-webkit-text-stroke:0.2px #555">2</div>
<div class="a" style="left:1192px;top:645px;width:73px;height:16px;background:#f9e7f5;border-radius:3px"></div>
<div class="t" style="left:1196.5px;top:647.4px;font-size:9.4px;color:#9c2b97;letter-spacing:-0.362px;-webkit-text-stroke:0.3px #9c2b97">Pending Review</div>
<div class="a" style="left:986px;top:301px;width:290px;height:371px;border:2px solid #426e32;border-radius:5px"></div>
<div class="a" style="left:986px;top:676px;width:290px;height:264px;background:#fff;border-radius:5px"></div>
<div class="a" style="left:986px;top:676px;width:290px;height:65px;background:#5a50ab;border-radius:5px 5px 0 0"></div>
<div class="t" style="left:996.7px;top:684.5px;font-size:16px;color:#fff;font-weight:bold;letter-spacing:-0.764px">Science Grade 5</div>
<div class="t" style="left:996.7px;top:715.5px;font-size:16px;color:#fff;letter-spacing:-0.333px;-webkit-text-stroke:0.2px #fff">The Ring of Fire</div>
<div class="t" style="left:996.7px;top:751.5px;font-size:16px;color:#555;letter-spacing:-0.147px;-webkit-text-stroke:0.45px #555">Lesson 2: intro to the class and t...</div>
<svg class="a" style="left:1249px;top:751px" width="14" height="16" viewBox="0 0 14 16"><rect x="0.6" y="2.6" width="12.8" height="12.8" rx="2" fill="none" stroke="#1a66d2" stroke-width="1.2"/><line x1="0.6" y1="5.8" x2="13.4" y2="5.8" stroke="#1a66d2" stroke-width="1.2"/><line x1="3.5" y1="0" x2="3.5" y2="3" stroke="#1a66d2" stroke-width="1.2"/><line x1="10.5" y1="0" x2="10.5" y2="3" stroke="#1a66d2" stroke-width="1.2"/></svg>
<div class="a" style="left:988px;top:781px;width:286px;height:1px;background:#dedede"></div>
<div class="a" style="left:1260px;top:791px;width:14px;height:121px;background:#f8f8f8"></div>
<svg class="a" style="left:1264px;top:797px" width="12" height="10" viewBox="0 0 12 10"><path d="M6 1.2 L11 9 L1 9 Z" fill="#8d8d8d" stroke="#8d8d8d" stroke-width="1.6" stroke-linejoin="round"/></svg>
<div class="a" style="left:1264px;top:813px;width:12px;height:147px;background:#8d8d8d;border-radius:5px"></div>
<div class="t" style="left:996.7px;top:818.0px;font-size:16px;color:#333;letter-spacing:-0.023px;-webkit-text-stroke:0.2px #333">Monday - Intro to the textbook. Play</div>
<div class="t" style="left:996.7px;top:840.5px;font-size:16px;color:#333;letter-spacing:0.047px;-webkit-text-stroke:0.2px #333">introductory game.</div>
<div class="t" style="left:996.7px;top:889.1px;font-size:16px;color:#333;letter-spacing:-0.273px;-webkit-text-stroke:0.2px #333">Wednesday - Review table of</div>
<div class="a" style="left:986px;top:676px;width:290px;height:264px;border:2px solid #5a50ab;border-radius:5px"></div>
<div class="a" style="left:1286px;top:301px;width:291px;height:371px;background:#fff;border-radius:5px"></div>
<div class="a" style="left:1286px;top:301px;width:291px;height:65px;background:#426e32;border-radius:5px 5px 0 0"></div>
<div class="t" style="left:1296.7px;top:309.7px;font-size:16px;color:#fff;font-weight:bold;letter-spacing:0.2px">Math 1</div>
<div class="t" style="left:1296.7px;top:340.5px;font-size:16px;color:#fff;font-style:italic;letter-spacing:-0.518px;-webkit-text-stroke:0.2px #fff">Deleted Unit</div>
<div class="t" style="left:1296.7px;top:376.5px;font-size:16px;color:#555;letter-spacing:-0.475px;-webkit-text-stroke:0.45px #555">Ones and Tens</div>
<svg class="a" style="left:1550px;top:376px" width="14" height="16" viewBox="0 0 14 16"><rect x="0.6" y="2.6" width="12.8" height="12.8" rx="2" fill="none" stroke="#1a66d2" stroke-width="1.2"/><line x1="0.6" y1="5.8" x2="13.4" y2="5.8" stroke="#1a66d2" stroke-width="1.2"/><line x1="3.5" y1="0" x2="3.5" y2="3" stroke="#1a66d2" stroke-width="1.2"/><line x1="10.5" y1="0" x2="10.5" y2="3" stroke="#1a66d2" stroke-width="1.2"/></svg>
<div class="a" style="left:1288px;top:406px;width:287px;height:1px;background:#dedede"></div>
<div class="a" style="left:1561px;top:416px;width:14px;height:207px;background:#f8f8f8"></div>
<svg class="a" style="left:1565px;top:422px" width="12" height="10" viewBox="0 0 12 10"><path d="M6 1.2 L11 9 L1 9 Z" fill="#8d8d8d" stroke="#8d8d8d" stroke-width="1.6" stroke-linejoin="round"/></svg>
<svg class="a" style="left:1565px;top:608px" width="12" height="10" viewBox="0 0 12 10"><path d="M1 1 L11 1 L6 8.8 Z" fill="#8d8d8d" stroke="#8d8d8d" stroke-width="1.6" stroke-linejoin="round"/></svg>
<div class="a" style="left:1565px;top:439px;width:12px;height:21px;background:#8d8d8d;border-radius:5px"></div>
<div class="t" style="left:1297.0px;top:440.5px;font-size:16px;color:#333;letter-spacing:-0.179px;-webkit-text-stroke:0.5px #333"><u>Brief Lesson Description:&nbsp;</u></div>
<div class="t" style="left:1297.0px;top:487.6px;font-size:16px;color:#333;letter-spacing:-0.315px;-webkit-text-stroke:0.5px #333"><u>Specific Learning Outcomes:</u></div>
<div class="t" style="left:1297.0px;top:534.7px;font-size:16px;color:#000;letter-spacing:0.013px;-webkit-text-stroke:0.5px #000"><u>Narrative/Background Information:</u></div>
<div class="t" style="left:1297.0px;top:582.5px;font-size:16px;color:#333;letter-spacing:-0.161px;-webkit-text-stroke:0.5px #333"><u>Prior Student Knowledge:</u></div>
<div class="t" style="left:1297.0px;top:606.1px;font-size:16px;color:#333;letter-spacing:-0.486px;-webkit-text-stroke:0.5px #333"><u>Possible</u></div>
<div class="a" style="left:1288px;top:632px;width:287px;height:1px;background:#dedede"></div>
<svg class="a" style="left:1296px;top:643px" width="13" height="13" viewBox="0 0 13 13"><rect x="0.6" y="0.6" width="11.8" height="11.8" rx="1.5" fill="none" stroke="#666" stroke-width="1.1"/><path d="M3.4 6.6 L5.4 8.4 L9.2 4.6" fill="none" stroke="#555" stroke-width="1.1"/></svg>
<div class="t" style="left:1312.3px;top:643.3px;font-size:14px;color:#555;-webkit-text-stroke:0.2px #555">2</div>
<div class="a" style="left:1493px;top:645px;width:73px;height:16px;background:#f9e7f5;border-radius:3px"></div>
<div class="t" style="left:1497.5px;top:647.4px;font-size:9.4px;color:#9c2b97;letter-spacing:-0.362px;-webkit-text-stroke:0.3px #9c2b97">Pending Review</div>
<div class="a" style="left:1286px;top:301px;width:291px;height:371px;border:2px solid #426e32;border-radius:5px"></div>
<div class="a" style="left:1286px;top:676px;width:291px;height:264px;background:#fff;border-radius:5px"></div>
<div class="a" style="left:1286px;top:676px;width:291px;height:65px;background:#5a50ab;border-radius:5px 5px 0 0"></div>
<div class="t" style="left:1296.7px;top:684.5px;font-size:16px;color:#fff;font-weight:bold;letter-spacing:-0.764px">Science Grade 5</div>
<div class="t" style="left:1296.7px;top:715.5px;font-size:16px;color:#fff;letter-spacing:-0.333px;-webkit-text-stroke:0.2px #fff">The Ring of Fire</div>
<div class="t" style="left:1296.7px;top:751.5px;font-size:16px;color:#555;letter-spacing:-0.147px;-webkit-text-stroke:0.45px #555">Lesson 2: intro to the class and t...</div>
<svg class="a" style="left:1550px;top:751px" width="14" height="16" viewBox="0 0 14 16"><rect x="0.6" y="2.6" width="12.8" height="12.8" rx="2" fill="none" stroke="#1a66d2" stroke-width="1.2"/><line x1="0.6" y1="5.8" x2="13.4" y2="5.8" stroke="#1a66d2" stroke-width="1.2"/><line x1="3.5" y1="0" x2="3.5" y2="3" stroke="#1a66d2" stroke-width="1.2"/><line x1="10.5" y1="0" x2="10.5" y2="3" stroke="#1a66d2" stroke-width="1.2"/></svg>
<div class="a" style="left:1288px;top:781px;width:287px;height:1px;background:#dedede"></div>
<div class="a" style="left:1561px;top:791px;width:14px;height:121px;background:#f8f8f8"></div>
<svg class="a" style="left:1565px;top:797px" width="12" height="10" viewBox="0 0 12 10"><path d="M6 1.2 L11 9 L1 9 Z" fill="#8d8d8d" stroke="#8d8d8d" stroke-width="1.6" stroke-linejoin="round"/></svg>
<div class="a" style="left:1565px;top:813px;width:12px;height:147px;background:#8d8d8d;border-radius:5px"></div>
<div class="t" style="left:1296.7px;top:818.0px;font-size:16px;color:#333;letter-spacing:-0.023px;-webkit-text-stroke:0.2px #333">Monday - Intro to the textbook. Play</div>
<div class="t" style="left:1296.7px;top:840.5px;font-size:16px;color:#333;letter-spacing:0.047px;-webkit-text-stroke:0.2px #333">introductory game.</div>
<div class="t" style="left:1296.7px;top:889.1px;font-size:16px;color:#333;letter-spacing:-0.273px;-webkit-text-stroke:0.2px #333">Wednesday - Review table of</div>
<div class="a" style="left:1286px;top:676px;width:291px;height:264px;border:2px solid #5a50ab;border-radius:5px"></div>
<div class="a" style="left:1587px;top:301px;width:292px;height:371px;background:#fff;border-radius:5px"></div>
<div class="a" style="left:1587px;top:301px;width:292px;height:65px;background:#426e32;border-radius:5px 5px 0 0"></div>
<div class="t" style="left:1597.7px;top:309.7px;font-size:16px;color:#fff;font-weight:bold;letter-spacing:0.2px">Math 1</div>
<div class="t" style="left:1597.7px;top:340.5px;font-size:16px;color:#fff;font-style:italic;letter-spacing:-0.518px;-webkit-text-stroke:0.2px #fff">Deleted Unit</div>
<div class="t" style="left:1597.7px;top:376.5px;font-size:16px;color:#555;letter-spacing:-0.475px;-webkit-text-stroke:0.45px #555">Ones and Tens</div>
<svg class="a" style="left:1852px;top:376px" width="14" height="16" viewBox="0 0 14 16"><rect x="0.6" y="2.6" width="12.8" height="12.8" rx="2" fill="none" stroke="#1a66d2" stroke-width="1.2"/><line x1="0.6" y1="5.8" x2="13.4" y2="5.8" stroke="#1a66d2" stroke-width="1.2"/><line x1="3.5" y1="0" x2="3.5" y2="3" stroke="#1a66d2" stroke-width="1.2"/><line x1="10.5" y1="0" x2="10.5" y2="3" stroke="#1a66d2" stroke-width="1.2"/></svg>
<div class="a" style="left:1589px;top:406px;width:288px;height:1px;background:#dedede"></div>
<div class="a" style="left:1863px;top:416px;width:14px;height:207px;background:#f8f8f8"></div>
<svg class="a" style="left:1867px;top:422px" width="12" height="10" viewBox="0 0 12 10"><path d="M6 1.2 L11 9 L1 9 Z" fill="#8d8d8d" stroke="#8d8d8d" stroke-width="1.6" stroke-linejoin="round"/></svg>
<svg class="a" style="left:1867px;top:608px" width="12" height="10" viewBox="0 0 12 10"><path d="M1 1 L11 1 L6 8.8 Z" fill="#8d8d8d" stroke="#8d8d8d" stroke-width="1.6" stroke-linejoin="round"/></svg>
<div class="a" style="left:1867px;top:439px;width:12px;height:21px;background:#8d8d8d;border-radius:5px"></div>
<div class="t" style="left:1598.0px;top:440.5px;font-size:16px;color:#333;letter-spacing:-0.179px;-webkit-text-stroke:0.5px #333"><u>Brief Lesson Description:&nbsp;</u></div>
<div class="t" style="left:1598.0px;top:487.6px;font-size:16px;color:#333;letter-spacing:-0.315px;-webkit-text-stroke:0.5px #333"><u>Specific Learning Outcomes:</u></div>
<div class="t" style="left:1598.0px;top:534.7px;font-size:16px;color:#000;letter-spacing:0.013px;-webkit-text-stroke:0.5px #000"><u>Narrative/Background Information:</u></div>
<div class="t" style="left:1598.0px;top:582.5px;font-size:16px;color:#333;letter-spacing:-0.161px;-webkit-text-stroke:0.5px #333"><u>Prior Student Knowledge:</u></div>
<div class="t" style="left:1598.0px;top:606.1px;font-size:16px;color:#333;letter-spacing:-0.486px;-webkit-text-stroke:0.5px #333"><u>Possible</u></div>
<div class="a" style="left:1589px;top:632px;width:288px;height:1px;background:#dedede"></div>
<svg class="a" style="left:1597px;top:643px" width="13" height="13" viewBox="0 0 13 13"><rect x="0.6" y="0.6" width="11.8" height="11.8" rx="1.5" fill="none" stroke="#666" stroke-width="1.1"/><path d="M3.4 6.6 L5.4 8.4 L9.2 4.6" fill="none" stroke="#555" stroke-width="1.1"/></svg>
<div class="t" style="left:1613.3px;top:643.3px;font-size:14px;color:#555;-webkit-text-stroke:0.2px #555">2</div>
<div class="a" style="left:1795px;top:645px;width:73px;height:16px;background:#f9e7f5;border-radius:3px"></div>
<div class="t" style="left:1799.5px;top:647.4px;font-size:9.4px;color:#9c2b97;letter-spacing:-0.362px;-webkit-text-stroke:0.3px #9c2b97">Pending Review</div>
<div class="a" style="left:1587px;top:301px;width:292px;height:371px;border:2px solid #426e32;border-radius:5px"></div>
<div class="a" style="left:1587px;top:676px;width:292px;height:264px;background:#fff;border-radius:5px"></div>
<div class="a" style="left:1587px;top:676px;width:292px;height:65px;background:#5a50ab;border-radius:5px 5px 0 0"></div>
<div class="t" style="left:1597.7px;top:684.5px;font-size:16px;color:#fff;font-weight:bold;letter-spacing:-0.764px">Science Grade 5</div>
<div class="t" style="left:1597.7px;top:715.5px;font-size:16px;color:#fff;letter-spacing:-0.333px;-webkit-text-stroke:0.2px #fff">The Ring of Fire</div>
<div class="t" style="left:1597.7px;top:751.5px;font-size:16px;color:#555;letter-spacing:-0.147px;-webkit-text-stroke:0.45px #555">Lesson 2: intro to the class and t...</div>
<svg class="a" style="left:1852px;top:751px" width="14" height="16" viewBox="0 0 14 16"><rect x="0.6" y="2.6" width="12.8" height="12.8" rx="2" fill="none" stroke="#1a66d2" stroke-width="1.2"/><line x1="0.6" y1="5.8" x2="13.4" y2="5.8" stroke="#1a66d2" stroke-width="1.2"/><line x1="3.5" y1="0" x2="3.5" y2="3" stroke="#1a66d2" stroke-width="1.2"/><line x1="10.5" y1="0" x2="10.5" y2="3" stroke="#1a66d2" stroke-width="1.2"/></svg>
<div class="a" style="left:1589px;top:781px;width:288px;height:1px;background:#dedede"></div>
<div class="a" style="left:1863px;top:791px;width:14px;height:121px;background:#f8f8f8"></div>
<svg class="a" style="left:1867px;top:797px" width="12" height="10" viewBox="0 0 12 10"><path d="M6 1.2 L11 9 L1 9 Z" fill="#8d8d8d" stroke="#8d8d8d" stroke-width="1.6" stroke-linejoin="round"/></svg>
<div class="a" style="left:1867px;top:813px;width:12px;height:147px;background:#8d8d8d;border-radius:5px"></div>
<div class="t" style="left:1597.7px;top:818.0px;font-size:16px;color:#333;letter-spacing:-0.023px;-webkit-text-stroke:0.2px #333">Monday - Intro to the textbook. Play</div>
<div class="t" style="left:1597.7px;top:840.5px;font-size:16px;color:#333;letter-spacing:0.047px;-webkit-text-stroke:0.2px #333">introductory game.</div>
<div class="t" style="left:1597.7px;top:889.1px;font-size:16px;color:#333;letter-spacing:-0.229px;-webkit-text-stroke:0.2px #333">Wednesday - Review table of contents</div>
<div class="a" style="left:1587px;top:676px;width:292px;height:264px;border:2px solid #5a50ab;border-radius:5px"></div>
</body></html>
